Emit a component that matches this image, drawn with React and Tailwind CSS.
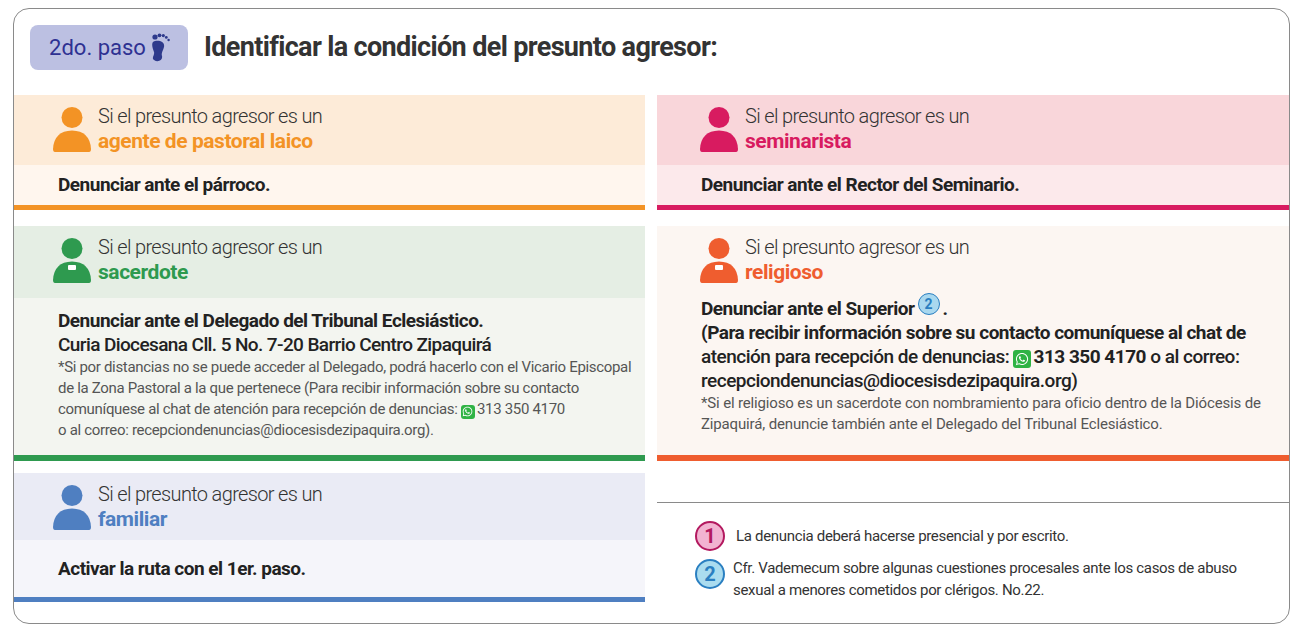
import React from "react";
import { FaWhatsapp } from "react-icons/fa";

const F = "font-['Roboto','Liberation_Sans',sans-serif]";

function Person({ color, collar }) {
  return (
    <svg width="38" height="46" viewBox="0 0 38 46" className="shrink-0">
      <circle cx="19" cy="10.5" r="10.5" fill={color} />
      <path d="M2 45 Q0 45 0 42 Q1 24 19 23.5 Q37 24 38 42 Q38 45 36 45 Z" fill={color} />
      {collar && <rect x="15" y="27" width="8" height="5" rx="1" fill="#fff" />}
    </svg>
  );
}

function Foot() {
  return (
    <svg width="22" height="30" viewBox="0 0 22 30">
      <path d="M6 9 C11 8 16 10 15 15 C14 19 12 21 13 24 C14 28 9 31 5 28 C2 26 6 23 5 20 C4 17 1 10 6 9 Z" fill="#2e3a8c" />
      <circle cx="6" cy="5" r="2.6" fill="#2e3a8c" />
      <circle cx="10.5" cy="3.3" r="1.9" fill="#2e3a8c" />
      <circle cx="14.3" cy="3.6" r="1.6" fill="#2e3a8c" />
      <circle cx="17.3" cy="5.4" r="1.4" fill="#2e3a8c" />
      <circle cx="19.6" cy="8" r="1.2" fill="#2e3a8c" />
    </svg>
  );
}

function Wa({ size = "w-[18px] h-[18px]", icon = 14 }) {
  return (
    <span className={`inline-flex ${size} items-center justify-center rounded-[3px] bg-[#2fb344] align-[-3px] mr-[2px]`}>
      <FaWhatsapp color="#fff" size={icon} />
    </span>
  );
}

function Header({ color, label, collar, pl = "pl-[39px]" }) {
  return (
    <div className={`flex items-start ${pl} pt-[12px] gap-[7px]`}>
      <Person color={color} collar={collar} />
      <div className="flex flex-col -mt-[3px] whitespace-nowrap">
        <span className="text-[20px] leading-[25px] font-light tracking-[-0.65px] text-[#333]">Si el presunto agresor es un</span>
        <span className="text-[21px] leading-[25px] font-bold tracking-[-0.45px]" style={{ color }}>{label}</span>
      </div>
    </div>
  );
}

const BODY = "text-[19px] leading-[24px] font-bold tracking-[-0.5px] text-[#222] whitespace-nowrap";
const SMALL = "text-[15px] leading-[21px] tracking-[-0.32px] text-[#555] whitespace-nowrap";
const NOTE = "text-[15px] tracking-[-0.32px] text-[#333] whitespace-nowrap";

export default function App() {
  return (
    <div className={`w-[1300px] h-[627px] bg-white ${F} pt-[8px] pl-[13px]`}>
      <div className="w-[1277px] h-[616px] border border-[#8a8a8a] rounded-[16px] overflow-hidden flex flex-col">
        <div className="flex items-center h-[86px] pl-[16px] pb-[13px] pt-[3px] gap-[16px]">
          <div className="w-[158px] h-[45px] rounded-[8px] bg-[#bcc0e2] flex items-center justify-center gap-[3px] pl-[2px]">
            <span className="text-[22px] text-[#2e3192]">2do. paso</span>
            <Foot />
          </div>
          <span className="text-[27px] font-bold text-[#333] tracking-[-0.65px] whitespace-nowrap">Identificar la condición del presunto agresor:</span>
        </div>
        <div className="flex gap-[12px]">
          {/* left column */}
          <div className="w-[631px] flex flex-col">
            <div className="flex flex-col">
              <div className="h-[70px] bg-[#fdebd8]">
                <Header color="#f39325" label="agente de pastoral laico" />
              </div>
              <div className="h-[40px] bg-[#fff6ee] pl-[44px] flex items-center">
                <span className={BODY}>Denunciar ante el párroco.</span>
              </div>
              <div className="h-[5px] bg-[#f39325]" />
            </div>
            <div className="flex flex-col mt-[16px]">
              <div className="h-[72px] bg-[#e5eee4]">
                <Header color="#2e9a4f" label="sacerdote" collar />
              </div>
              <div className="h-[157px] bg-[#f3f5f0] pl-[44px] pt-[11px]">
                <div className={BODY}>Denunciar ante el Delegado del Tribunal Eclesiástico.</div>
                <div className="text-[19px] leading-[24px] font-medium tracking-[-0.6px] text-[#222] whitespace-nowrap">Curia Diocesana Cll. 5 No. 7-20 Barrio Centro Zipaquirá</div>
                <div className={SMALL}>
                  *Si por distancias no se puede acceder al Delegado, podrá hacerlo con el Vicario Episcopal<br />
                  de la Zona Pastoral a la que pertenece (Para recibir información sobre su contacto<br />
                  comuníquese al chat de atención para recepción de denuncias: <Wa size="w-[14px] h-[14px]" icon={11} />313 350 4170<br />
                  o al correo: recepciondenuncias@diocesisdezipaquira.org).
                </div>
              </div>
              <div className="h-[6px] bg-[#2e9a4f]" />
            </div>
            <div className="flex flex-col mt-[12px]">
              <div className="h-[67px] bg-[#eaebf5]">
                <Header color="#4f7fc1" label="familiar" />
              </div>
              <div className="h-[57px] bg-[#f5f5fa] pl-[44px] flex items-center">
                <span className={BODY}>Activar la ruta con el 1er. paso.</span>
              </div>
              <div className="h-[5px] bg-[#4f7fc1]" />
            </div>
          </div>
          {/* right column */}
          <div className="flex-1 flex flex-col">
            <div className="flex flex-col">
              <div className="h-[70px] bg-[#f9d6da]">
                <Header color="#d81b60" label="seminarista" pl="pl-[43px]" />
              </div>
              <div className="h-[40px] bg-[#fce9eb] pl-[44px] flex items-center">
                <span className={BODY}>Denunciar ante el Rector del Seminario.</span>
              </div>
              <div className="h-[5px] bg-[#d81b60]" />
            </div>
            <div className="flex flex-col mt-[16px]">
              <div className="h-[229px] bg-[#fcf6f2]">
                <Header color="#ef5d2f" label="religioso" collar pl="pl-[43px]" />
                <div className="pl-[44px] pt-[12px]">
                  <div className={`${BODY} flex items-center`}>
                    Denunciar ante el Superior
                    <span className="inline-flex w-[22px] h-[22px] rounded-full bg-[#a9d8ef] border-[1.5px] border-[#2a7fc1] text-[#2a7fc1] text-[14px] font-bold items-center justify-center ml-[3px] -mt-[10px] tracking-normal">2</span>
                    <span className="ml-[3px]">.</span>
                  </div>
                  <div className={BODY}>
                    (Para recibir información sobre su contacto comuníquese al chat de<br />
                    <span className="font-medium">atención para recepción de denuncias: </span><Wa />313 350 4170 <span className="font-medium">o al correo:</span><br />
                    <span className="font-medium">recepciondenuncias@diocesisdezipaquira.org)</span>
                  </div>
                  <div className="text-[15px] leading-[21px] tracking-[-0.15px] text-[#555] whitespace-nowrap">
                    *Si el religioso es un sacerdote con nombramiento para oficio dentro de la Diócesis de<br />
                    Zipaquirá, denuncie también ante el Delegado del Tribunal Eclesiástico.
                  </div>
                </div>
              </div>
              <div className="h-[6px] bg-[#ef5d2f]" />
            </div>
            <div className="mt-[41px] border-t border-[#8a8a8a]" />
            <div className="flex flex-col pl-[38px] pt-[18px] gap-[6px]">
              <div className="flex items-center gap-[11px]">
                <span className="w-[30px] h-[30px] rounded-full bg-[#f2b3d1] border-[2.5px] border-[#b3195f] text-[#b3195f] text-[20px] font-bold flex items-center justify-center">1</span>
                <span className={NOTE}>La denuncia deberá hacerse presencial y por escrito.</span>
              </div>
              <div className="flex items-start gap-[8px]">
                <span className="w-[30px] h-[30px] rounded-full bg-[#aadcef] border-[2.5px] border-[#2a7fc1] text-[#2a7fc1] text-[20px] font-bold flex items-center justify-center shrink-0 mt-[2px]">2</span>
                <span className={`${NOTE} leading-[22px]`}>Cfr. Vademecum sobre algunas cuestiones procesales ante los casos de abuso<br />sexual a menores cometidos por clérigos. No.22.</span>
              </div>
            </div>
          </div>
        </div>
      </div>
    </div>
  );
}
